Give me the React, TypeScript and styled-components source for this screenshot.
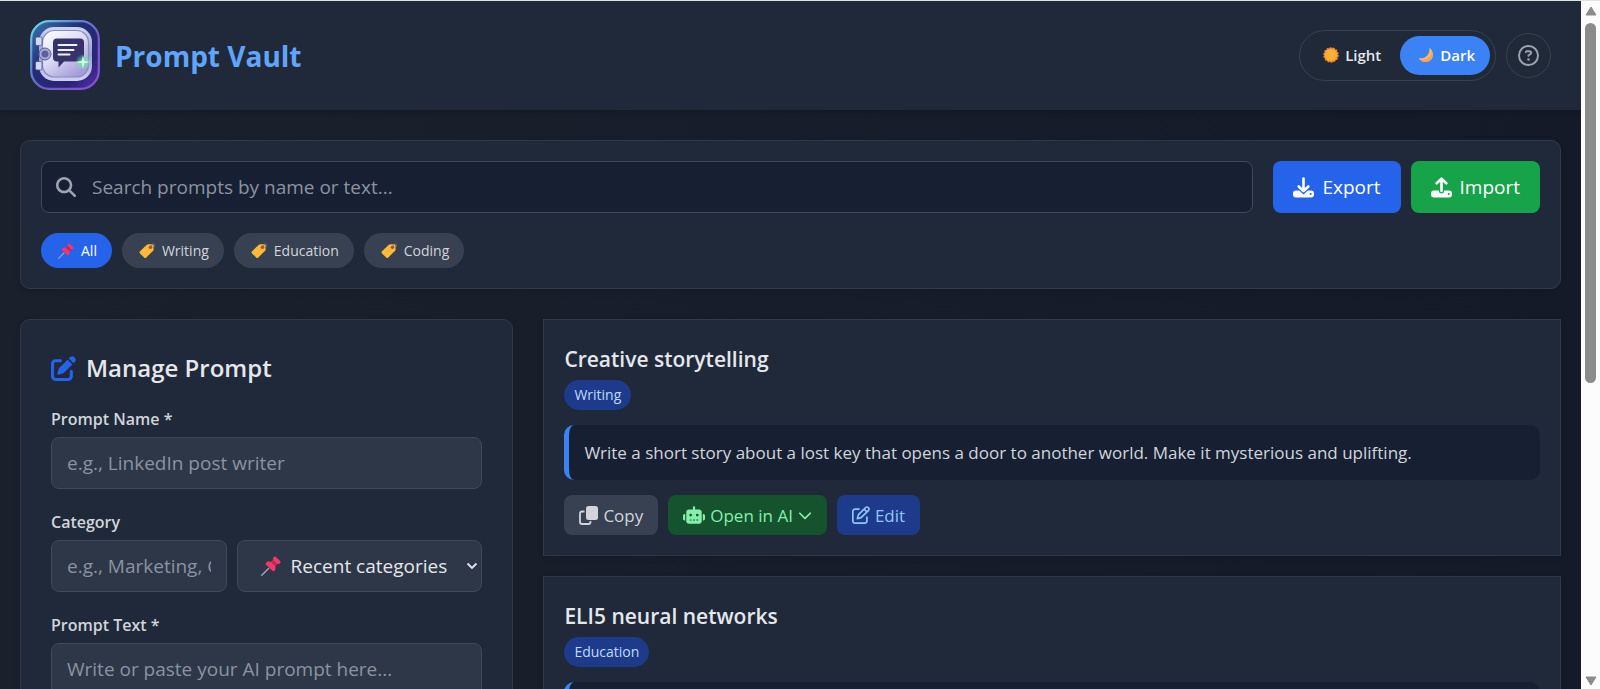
import React from 'react';
import styled, { createGlobalStyle, css } from 'styled-components';
import { FaPenToSquare, FaRegPenToSquare, FaRobot, FaMagnifyingGlass, FaRegCircleQuestion, FaChevronDown } from 'react-icons/fa6';

const GlobalStyle = createGlobalStyle`
  *, *::before, *::after { box-sizing: border-box; }
  body {
    margin: 0;
    background: #171e2b;
    color: #e5e7eb;
    font-family: "Open Sans", "Noto Sans", sans-serif;
  }
  button, input, select, textarea { font-family: inherit; }
  button { cursor: pointer; }
  h1, h2, h3, p { margin: 0; }
`;

const Window = styled.div`
  display: flex;
  height: 100vh;
  border-top: 1px solid #dde5dd;
`;

const Page = styled.div`
  flex: 1;
  min-width: 0;
  overflow-y: auto;
  scrollbar-width: none;
  background: linear-gradient(90deg, #1a202c, #141a27);
`;

const Header = styled.header`
  display: flex;
  align-items: center;
  justify-content: space-between;
  padding: 19px 30px 20px;
  background: #1f293a;
  box-shadow: 0 2px 6px rgba(0, 0, 0, 0.15);
`;

const Brand = styled.div`
  display: flex;
  align-items: center;
  gap: 15px;
`;

const BrandName = styled.h1`
  padding-top: 2px;
  font-size: 28px;
  line-height: 40px;
  font-weight: 700;
  color: #60a5fa;
`;

const HeaderActions = styled.div`
  display: flex;
  align-items: center;
  gap: 10px;
`;

const ThemeToggle = styled.div`
  display: flex;
  gap: 4px;
  padding: 5px;
  border: 1px solid #374151;
  border-radius: 26px;
  background: #1f2937;
`;

const ThemeButton = styled.button<{ $active?: boolean }>`
  display: flex;
  align-items: center;
  gap: 6px;
  height: 39px;
  padding: 0 15px 0 18px;
  border: 0;
  border-radius: 20px;
  font-size: 15px;
  font-weight: 600;
  color: ${p => (p.$active ? '#ffffff' : '#e5e7eb')};
  background: ${p => (p.$active ? '#3b82f6' : 'transparent')};
`;

const HelpButton = styled.button`
  display: grid;
  place-items: center;
  width: 45px;
  height: 45px;
  padding: 0;
  border: 1px solid #374151;
  border-radius: 50%;
  background: #1f2937;
  color: #9ca3af;
  font-size: 21px;
`;

const Main = styled.main`
  display: flex;
  flex-direction: column;
  gap: 30px;
  padding: 30px 20px;
`;

const panel = css`
  border: 1px solid #2f3a4a;
  background: #1f293a;
  box-shadow: 0 2px 6px rgba(0, 0, 0, 0.1);
`;

const Toolbar = styled.section`
  ${panel}
  display: flex;
  flex-direction: column;
  gap: 20px;
  padding: 20px;
  border-radius: 10px;
`;

const ToolbarRow = styled.div`
  display: flex;
  gap: 10px;
`;

const SearchBox = styled.label`
  display: flex;
  align-items: center;
  flex: 1;
  height: 52px;
  margin-right: 10px;
  padding: 0 14px;
  gap: 16px;
  border: 1px solid #3f4958;
  border-radius: 8px;
  background: #172033;
  color: #9ca3af;
  font-size: 20px;
`;

const SearchInput = styled.input`
  flex: 1;
  min-width: 0;
  padding: 0;
  border: 0;
  outline: 0;
  background: none;
  color: #e5e7eb;
  font-size: 19px;
  &::placeholder { color: #8b93a0; opacity: 1; }
`;

const ActionButton = styled.button<{ $color: string }>`
  display: flex;
  align-items: center;
  gap: 8px;
  height: 52px;
  padding: 0 20px;
  border: 0;
  border-radius: 8px;
  background: ${p => p.$color};
  color: #ffffff;
  font-size: 19px;
`;

const Chip = styled.button<{ $active?: boolean }>`
  display: flex;
  align-items: center;
  gap: 7px;
  height: 35px;
  padding: 0 15px 0 17px;
  border: 0;
  border-radius: 18px;
  font-size: 14px;
  color: ${p => (p.$active ? '#ffffff' : '#d1d5db')};
  background: ${p => (p.$active ? '#2563eb' : '#374151')};
`;

const Columns = styled.div`
  display: grid;
  grid-template-columns: 32fr 66fr;
  gap: 30px;
  align-items: start;
`;

const FormPanel = styled.form`
  ${panel}
  display: flex;
  flex-direction: column;
  gap: 20px;
  padding: 30px;
  border-radius: 10px;
`;

const FormTitle = styled.h2`
  display: flex;
  align-items: center;
  gap: 10px;
  font-size: 24px;
  line-height: 36px;
  font-weight: 600;
  svg { color: #2563eb; }
`;

const Field = styled.div`
  display: flex;
  flex-direction: column;
  gap: 5px;
`;

const Label = styled.label`
  font-size: 16px;
  line-height: 26px;
  font-weight: 600;
  color: #d1d5db;
`;

const control = css`
  width: 100%;
  min-width: 0;
  height: 52px;
  padding: 0 15px;
  border: 1px solid #3f4958;
  border-radius: 8px;
  background: #2d3748;
  color: #e5e7eb;
  font-size: 19px;
  &::placeholder { color: #8b93a0; opacity: 1; }
`;

const TextInput = styled.input`${control}`;

const TextArea = styled.textarea`
  ${control}
  height: 150px;
  padding: 12px 15px;
  resize: vertical;
`;

const CategoryRow = styled.div`
  display: grid;
  grid-template-columns: 5fr 7fr;
  gap: 10px;
`;

const SelectWrap = styled.div`
  position: relative;
`;

const Select = styled.select`
  ${control}
  padding: 0 30px 0 53px;
  appearance: none;
`;

const SelectIcon = styled.span<{ $side: 'left' | 'right' }>`
  position: absolute;
  top: 0;
  bottom: 0;
  ${p => (p.$side === 'left' ? 'left: 24px;' : 'right: 4px;')}
  display: flex;
  align-items: center;
  pointer-events: none;
`;

const CardList = styled.div`
  display: flex;
  flex-direction: column;
  gap: 20px;
`;

const Card = styled.article`
  ${panel}
  display: flex;
  flex-direction: column;
  align-items: flex-start;
  gap: 15px;
  padding: 20px;
`;

const CardHead = styled.div`
  display: flex;
  flex-direction: column;
  align-items: flex-start;
  gap: 2px;
`;

const CardTitle = styled.h3`
  font-size: 21px;
  line-height: 38px;
  font-weight: 600;
`;

const Badge = styled.span`
  padding: 0 10px;
  border-radius: 15px;
  background: #1e3a8a;
  color: #bfdbfe;
  font-size: 14px;
  line-height: 30px;
`;

const PromptText = styled.p`
  width: 100%;
  padding: 14px 15px;
  border-left: 5px solid #3b82f6;
  border-radius: 10px;
  background: #172033;
  color: #d1d5db;
  font-size: 17px;
  line-height: 27px;
`;

const CardActions = styled.div`
  display: flex;
  gap: 10px;
`;

const CardButton = styled.button<{ $bg: string; $fg: string }>`
  display: flex;
  align-items: center;
  gap: 5px;
  height: 40px;
  padding: 0 15px;
  border: 0;
  border-radius: 8px;
  background: ${p => p.$bg};
  color: ${p => p.$fg};
  font-size: 17px;
`;

const ScrollTrack = styled.div`
  display: flex;
  flex-direction: column;
  align-items: center;
  gap: 7px;
  width: 19px;
  padding: 5px 0 3px;
  background: #fcfcfc;
`;

const ScrollThumb = styled.div`
  width: 11px;
  height: 53%;
  border-radius: 6px;
  background: #8b8b8b;
`;

const ScrollSpace = styled.div`
  flex: 1;
`;

const Logo = () => (
  <svg width="70" height="70" viewBox="0 0 70 70" aria-hidden="true">
    <defs>
      <linearGradient id="rim" x1="0" y1="0" x2="1" y2="1">
        <stop offset="0" stopColor="#6fe3ee" /><stop offset=".3" stopColor="#5a8fd6" /><stop offset=".6" stopColor="#6f5fc8" /><stop offset="1" stopColor="#8f4fd6" />
      </linearGradient>
      <linearGradient id="rimBase" x1="0" y1="0" x2="1" y2="1">
        <stop offset="0" stopColor="#3a78b0" /><stop offset=".4" stopColor="#252c74" /><stop offset=".75" stopColor="#2b2478" /><stop offset="1" stopColor="#5a2fae" />
      </linearGradient>
      <linearGradient id="door" x1="0" y1="0" x2=".7" y2="1">
        <stop offset="0" stopColor="#ffffff" /><stop offset=".5" stopColor="#dedcf5" /><stop offset="1" stopColor="#a49dd6" />
      </linearGradient>
      <linearGradient id="frame" x1="0" y1="0" x2="0" y2="1">
        <stop offset="0" stopColor="#cbd5f3" /><stop offset=".5" stopColor="#98a1d6" /><stop offset="1" stopColor="#d3cff2" />
      </linearGradient>
      <radialGradient id="spark"><stop offset="0" stopColor="#5cf0a0" /><stop offset="1" stopColor="#5cf0a0" stopOpacity="0" /></radialGradient>
    </defs>
    <rect x="1.200" y="1.200" width="67.600" height="67.600" rx="18" fill="url(#rimBase)" stroke="url(#rim)" strokeWidth="2.200" />
    <rect x="9" y="7" width="53" height="54" rx="15" fill="url(#frame)" />
    <rect x="12.500" y="10.500" width="46" height="46.500" rx="12" fill="url(#door)" stroke="#858dc6" strokeWidth="1.200" />
    <rect x="5.500" y="17" width="6.500" height="8.500" rx="1.500" fill="#d3d8f3" stroke="#4a5294" strokeWidth=".8" />
    <rect x="5.500" y="41.500" width="6.500" height="8.500" rx="1.500" fill="#d3d8f3" stroke="#4a5294" strokeWidth=".8" />
    <path d="M27 18.500h23q4 0 4 4v15q0 4-4 4H34l-5.500 6v-6H27q-4 0-4-4v-15q0-4 4-4z" fill="#36326c" />
    <path d="M28.500 25h18M28.500 30h15M28.500 34.500h11" stroke="#f1f0ff" strokeWidth="2" strokeLinecap="round" />
    <circle cx="15" cy="34" r="6" fill="#a7aad3" stroke="#555b98" />
    <circle cx="15" cy="34" r="3.500" fill="#5b619c" />
    <circle cx="53" cy="42" r="8" fill="url(#spark)" />
    <path d="M53 35l1.200 5.800 5.800 1.200-5.800 1.200L53 49l-1.200-5.800L46 42l5.800-1.200z" fill="#d5ffe1" />
  </svg>
);

const Sun = () => (
  <svg width="16" height="16" viewBox="0 0 16 16" aria-hidden="true">
    <circle cx="8" cy="8" r="7" fill="#f78a2c" stroke="#f78a2c" strokeWidth="1.500" strokeDasharray="2 1.140" />
    <circle cx="8" cy="8" r="6" fill="#fbb035" />
  </svg>
);

const Moon = () => (
  <svg width="16" height="16" viewBox="0 0 16 16" aria-hidden="true">
    <path d="M11.500.8C17.500 5.500 15.500 15 7.500 15 4 15 1.500 13.300.6 11c6 1.500 11.400-3 10.900-10.200z" fill="#fcb75e" />
    <path d="M14.200 5c1 5-1.900 10-6.700 10-3.500 0-6-1.700-6.900-4 4.400 3.800 12.300 1.500 13.600-6z" fill="#f08f4e" opacity=".5" />
  </svg>
);

const Pin = ({ size }: { size: number }) => (
  <svg width={size} height={size} viewBox="0 0 20 20" aria-hidden="true">
    <path d="M.8 19.200L7.500 12.500" stroke="#a79bb5" strokeWidth="1.500" strokeLinecap="round" />
    <path d="M12.500 1.200c.8-1 1.700-.9 2.500-.1l4 4c.8.800.7 1.700-.3 2.400-.9.500-1.700.7-2.500.4l-2 2.100c.9 2.300.4 4.200-1.100 5.100-.7.400-1.400.1-2-.500L5.200 8.900c-.7-.7-.8-1.400-.3-2 1.100-1.300 3-1.700 5-.8l2.200-2.200c-.2-1 0-1.900.4-2.700z" fill="#f0386b" />
    <path d="M9.900 6.100l2.200-2.200 4.100 4-2 2.100z" fill="#c4254f" />
  </svg>
);

const Tag = () => (
  <svg width="16" height="16" viewBox="0 0 16 16" aria-hidden="true">
    <path d="M1 8.200L7.600 1.900c.5-.5 1-.7 1.700-.7l3.700.1c1 0 1.600.7 1.600 1.600v3.500c0 .700-.2 1.200-.7 1.700l-6.600 6.300c-.7.700-1.500.7-2.200 0L1 10.400c-.7-.7-.7-1.500 0-2.200z" fill="#fcb93b" />
    <circle cx="11.500" cy="4.300" r="1.700" fill="#b3462b" />
    <path d="M11.500 4.300c.4-2.300 2-3.800 3.500-3.200 1 .5.8 2.200-.4 3.400" fill="none" stroke="#7d7480" strokeWidth=".9" />
  </svg>
);

const TransferIcon = ({ up }: { up?: boolean }) => {
  const back = up ? '#16a34a' : '#2563eb';
  const arrow = up ? 'M10.500 14V2M5.700 6.300l4.800-4.600 4.800 4.600' : 'M10.500 1.500V14M5.700 9.500l4.800 4.600 4.800-4.600';
  return (
    <svg width="21" height="21" viewBox="0 0 21 21" fill="none" aria-hidden="true">
      <rect x="0" y="13.500" width="21" height="7" rx="3" fill="currentColor" />
      <path d={arrow} stroke={back} strokeWidth="5" strokeLinecap="round" />
      <path d={arrow} stroke="currentColor" strokeWidth="2.600" strokeLinecap="round" strokeLinejoin="round" />
      <circle cx="17.700" cy="17" r="1" fill={back} />
    </svg>
  );
};

const CopyIcon = () => (
  <svg width="19" height="19" viewBox="0 0 19 19" fill="none" aria-hidden="true">
    <path d="M5.500 5.500H3q-2 0-2 2V16q0 2 2 2h6.500q2 0 2-2v-1" stroke="currentColor" strokeWidth="1.800" />
    <rect x="7" y="0" width="12" height="14" rx="2.500" fill="currentColor" />
  </svg>
);

const Caret = () => (
  <svg width="12" height="8" viewBox="0 0 12 8" fill="none" aria-hidden="true">
    <path d="M1.500 1.500L6 6l4.500-4.500" stroke="#e5e7eb" strokeWidth="1.800" />
  </svg>
);

const Arrow = ({ up }: { up?: boolean }) => (
  <svg width="12" height="10" viewBox="0 0 12 10" aria-hidden="true">
    <path d={up ? 'M6 1l5 8H1z' : 'M6 9l5-8H1z'} fill="#8b8b8b" stroke="#8b8b8b" strokeLinejoin="round" />
  </svg>
);

const categories = ['Writing', 'Education', 'Coding'];

const prompts = [
  { title: 'Creative storytelling', category: 'Writing', text: 'Write a short story about a lost key that opens a door to another world. Make it mysterious and uplifting.' },
  { title: 'ELI5 neural networks', category: 'Education', text: 'Explain neural networks like I am five years old, using simple everyday examples.' },
];

export default function App() {
  return (
    <>
      <GlobalStyle />
      <Window>
        <Page>
          <Header>
            <Brand>
              <Logo />
              <BrandName>Prompt Vault</BrandName>
            </Brand>
            <HeaderActions>
              <ThemeToggle>
                <ThemeButton type="button"><Sun />Light</ThemeButton>
                <ThemeButton type="button" $active><Moon />Dark</ThemeButton>
              </ThemeToggle>
              <HelpButton type="button" aria-label="Help"><FaRegCircleQuestion /></HelpButton>
            </HeaderActions>
          </Header>
          <Main>
            <Toolbar>
              <ToolbarRow>
                <SearchBox>
                  <FaMagnifyingGlass />
                  <SearchInput type="text" aria-label="Search prompts" placeholder="Search prompts by name or text..." />
                </SearchBox>
                <ActionButton type="button" $color="#2563eb"><TransferIcon />Export</ActionButton>
                <ActionButton type="button" $color="#16a34a"><TransferIcon up />Import</ActionButton>
              </ToolbarRow>
              <ToolbarRow>
                <Chip type="button" $active><Pin size={16} />All</Chip>
                {categories.map(name => <Chip type="button" key={name}><Tag />{name}</Chip>)}
              </ToolbarRow>
            </Toolbar>
            <Columns>
              <FormPanel>
                <FormTitle><FaPenToSquare size={25} />Manage Prompt</FormTitle>
                <Field>
                  <Label htmlFor="name">Prompt Name *</Label>
                  <TextInput id="name" type="text" placeholder="e.g., LinkedIn post writer" />
                </Field>
                <Field>
                  <Label htmlFor="category">Category</Label>
                  <CategoryRow>
                    <TextInput id="category" type="text" placeholder="e.g., Marketing, Coding" />
                    <SelectWrap>
                      <Select aria-label="Recent categories" defaultValue="">
                        <option value="">Recent categories</option>
                        {categories.map(name => <option key={name}>{name}</option>)}
                      </Select>
                      <SelectIcon $side="left"><Pin size={20} /></SelectIcon>
                      <SelectIcon $side="right"><Caret /></SelectIcon>
                    </SelectWrap>
                  </CategoryRow>
                </Field>
                <Field>
                  <Label htmlFor="text">Prompt Text *</Label>
                  <TextArea id="text" placeholder="Write or paste your AI prompt here..." />
                </Field>
              </FormPanel>
              <CardList>
                {prompts.map(prompt => (
                  <Card key={prompt.title}>
                    <CardHead>
                      <CardTitle>{prompt.title}</CardTitle>
                      <Badge>{prompt.category}</Badge>
                    </CardHead>
                    <PromptText>{prompt.text}</PromptText>
                    <CardActions>
                      <CardButton type="button" $bg="#374151" $fg="#d1d5db"><CopyIcon />Copy</CardButton>
                      <CardButton type="button" $bg="#14532d" $fg="#86efac"><FaRobot size={22} />Open in AI<FaChevronDown size={14} /></CardButton>
                      <CardButton type="button" $bg="#1e3a8a" $fg="#93c5fd"><FaRegPenToSquare size={18} />Edit</CardButton>
                    </CardActions>
                  </Card>
                ))}
              </CardList>
            </Columns>
          </Main>
        </Page>
        <ScrollTrack aria-hidden="true">
          <Arrow up />
          <ScrollThumb />
          <ScrollSpace />
          <Arrow />
        </ScrollTrack>
      </Window>
    </>
  );
}
